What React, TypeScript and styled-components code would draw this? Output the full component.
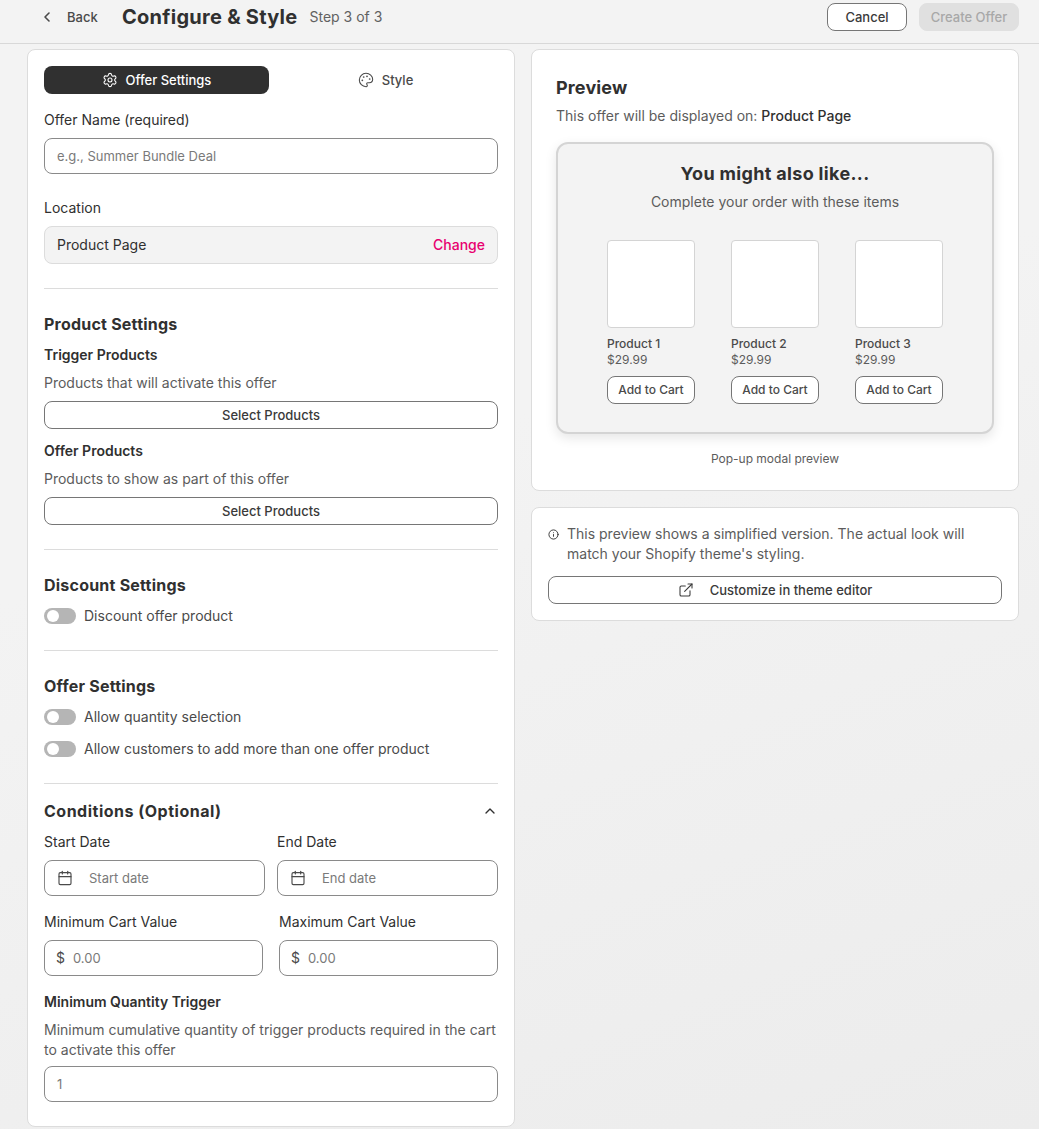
import React from "react";
import styled, { createGlobalStyle } from "styled-components";
import {
  Calendar,
  ChevronLeft,
  ChevronUp,
  ExternalLink,
  Info,
  Palette,
  Settings,
} from "lucide-react";

const GlobalStyle = createGlobalStyle`
  html, body {
    margin: 0;
    height: 1129px;
    overflow: hidden;
  }
  body {
    font-family: Inter, "Liberation Sans", sans-serif;
    font-size: 14px;
    line-height: 20px;
    color: #303030;
    background: #f1f1f1;
  }
  * {
    box-sizing: border-box;
  }
`;

const Page = styled.div`
  height: 1129px;
  background: linear-gradient(160deg, #f3f3f3 40%, #ececec 100%);
`;

const TopBar = styled.header`
  height: 44px;
  padding: 3px 20px 0 39px;
  display: flex;
  justify-content: space-between;
  align-items: flex-start;
  background: #f3f3f3;
  border-bottom: 1px solid #d8d8d8;
`;

const TopLeft = styled.div`
  display: flex;
  align-items: center;
  height: 28px;
`;

const BackLink = styled.div`
  display: flex;
  align-items: center;
  gap: 12px;
  width: 83px;
  font-size: 13px;
  font-weight: 500;
  color: #4a4a4a;
`;

const PageTitle = styled.h1`
  margin: 0 12px 0 0;
  font-size: 20px;
  line-height: 28px;
  font-weight: 700;
  letter-spacing: 0.27px;
  color: #303030;
`;

const StepText = styled.span`
  color: #616161;
  font-size: 14px;
`;

const TopActions = styled.div`
  display: flex;
  gap: 12px;
`;

const Button = styled.button<{ $width?: string }>`
  display: flex;
  align-items: center;
  justify-content: center;
  gap: 16px;
  height: 28px;
  width: ${(p) => p.$width || "100%"};
  padding: 0;
  font-family: inherit;
  font-size: 13px;
  font-weight: 500;
  color: #3a3a3a;
  background: #fff;
  border: 1px solid #767676;
  border-radius: 8px;
`;

const DisabledButton = styled(Button)`
  background: #e0e0e0;
  border-color: #e0e0e0;
  color: #a8a8a8;
`;

const Columns = styled.main`
  display: grid;
  grid-template-columns: 488px 488px;
  gap: 16px;
  padding: 5px 20px 0 27px;
  align-items: start;
`;

const Side = styled.div`
  display: flex;
  flex-direction: column;
  gap: 16px;
`;

const Card = styled.section<{ $pad?: number }>`
  padding: ${(p) => p.$pad ?? 16}px;
  background: #fff;
  border: 1px solid #dcdcdc;
  border-radius: 8px;
`;

const Tabs = styled.div`
  display: grid;
  grid-template-columns: 1fr 1fr;
  gap: 4px;
  margin-bottom: 16px;
`;

const Tab = styled.div<{ $active?: boolean }>`
  display: flex;
  align-items: center;
  justify-content: center;
  gap: 8px;
  height: 28px;
  font-size: 13px;
  font-weight: 500;
  border-radius: 8px;
  background: ${(p) => (p.$active ? "#303030" : "transparent")};
  color: ${(p) => (p.$active ? "#fff" : "#4a4a4a")};
`;

const Label = styled.div`
  margin-bottom: 8px;
  color: #303030;
`;

const Field = styled.div<{ $gap?: number }>`
  margin-bottom: ${(p) => p.$gap ?? 0}px;
`;

const InputBox = styled.label`
  display: flex;
  align-items: center;
  height: 36px;
  padding: 0 12px;
  background: #fff;
  border: 1px solid #8a8a8a;
  border-radius: 8px;
`;

const TextInput = styled.input`
  flex: 1;
  width: 0;
  min-width: 0;
  padding: 0;
  border: 0;
  outline: 0;
  background: transparent;
  font-family: inherit;
  font-size: 13px;
  color: #303030;
  &::placeholder {
    color: #7a7a7a;
    opacity: 1;
  }
`;

const CalendarSlot = styled.span`
  display: flex;
  width: 32px;
  color: #4a4a4a;
`;

const Currency = styled.span`
  width: 17px;
  margin-left: -1px;
  color: #4a4a4a;
  font-size: 14px;
`;

const LocationBox = styled.div`
  display: flex;
  align-items: center;
  justify-content: space-between;
  height: 38px;
  padding: 0 12px;
  background: #f3f3f3;
  border: 1px solid #dcdcdc;
  border-radius: 8px;
`;

const ChangeLink = styled.span`
  color: #e8006f;
  font-weight: 500;
`;

const Divider = styled.hr<{ $after?: number }>`
  height: 1px;
  margin: 24px 0 ${(p) => p.$after ?? 23}px;
  border: 0;
  background: #dcdcdc;
`;

const SectionTitle = styled.h2<{ $spacing?: number }>`
  margin: 0 0 9px;
  font-size: 16px;
  line-height: 24px;
  font-weight: 700;
  letter-spacing: ${(p) => p.$spacing ?? 0.22}px;
  color: #303030;
`;

const SubTitle = styled.h3`
  margin: 0 0 8px;
  font-size: 14px;
  line-height: 20px;
  font-weight: 600;
  color: #303030;
`;

const Hint = styled.p<{ $after?: number }>`
  margin: 0 0 ${(p) => p.$after ?? 8}px;
  color: #5c5c5c;
`;

const ProductGroup = styled.div`
  margin-bottom: 12px;
  &:last-child {
    margin-bottom: 0;
  }
`;

const ToggleRow = styled.div`
  display: flex;
  align-items: center;
  gap: 8px;
  margin-bottom: 12px;
  color: #4a4a4a;
  &:last-child {
    margin-bottom: 0;
  }
`;

const ToggleTrack = styled.span`
  display: flex;
  align-items: center;
  width: 32px;
  height: 16px;
  padding: 0 3px;
  border-radius: 8px;
  background: #b5b5b5;
`;

const ToggleKnob = styled.span`
  width: 12px;
  height: 12px;
  border-radius: 50%;
  background: #fff;
`;

const CollapseHead = styled.div`
  display: flex;
  align-items: center;
  justify-content: space-between;
  color: #303030;
  margin-bottom: 9px;
  ${SectionTitle} {
    margin: 0;
  }
`;

const TwoCols = styled.div<{ $gap: number }>`
  display: grid;
  grid-template-columns: minmax(0, 1fr) minmax(0, 1fr);
  gap: ${(p) => p.$gap}px;
  margin-bottom: 16px;
`;

const PreviewTitle = styled.h2`
  margin: 0 0 4px;
  font-size: 18px;
  line-height: 28px;
  font-weight: 700;
  letter-spacing: 0.15px;
  color: #303030;
`;

const PreviewNote = styled.p`
  margin: 0 0 16px;
  color: #5c5c5c;
  strong {
    font-weight: 500;
    color: #303030;
  }
`;

const Modal = styled.div`
  height: 292px;
  padding: 16px 0 0;
  background: #f3f3f3;
  border: 2px solid #d4d4d4;
  border-radius: 12px;
  box-shadow: 0 4px 12px rgba(0, 0, 0, 0.1);
  text-align: center;
`;

const ModalTitle = styled.div`
  font-size: 18px;
  line-height: 28px;
  font-weight: 700;
  letter-spacing: 0.33px;
  color: #303030;
`;

const ModalSub = styled.div`
  margin-top: 4px;
  margin-bottom: 28px;
  font-size: 14px;
  color: #5c5c5c;
`;

const ProductRow = styled.div`
  display: flex;
  justify-content: center;
  gap: 36px;
`;

const ProductCard = styled.div`
  width: 88px;
  text-align: left;
`;

const ProductImage = styled.div`
  height: 88px;
  margin-bottom: 8px;
  background: #fff;
  border: 1px solid #d4d4d4;
  border-radius: 4px;
`;

const ProductName = styled.div`
  font-size: 12px;
  line-height: 16px;
  font-weight: 500;
  color: #4a4a4a;
`;

const ProductPrice = styled.div`
  margin-bottom: 8px;
  font-size: 12px;
  line-height: 16px;
  color: #5c5c5c;
`;

const SmallButton = styled(Button)`
  padding-bottom: 1px;
  font-size: 12px;
  color: #4a4a4a;
`;

const Caption = styled.div`
  margin-top: 17px;
  margin-bottom: -1px;
  font-size: 12px;
  line-height: 16px;
  text-align: center;
  color: #5c5c5c;
`;

const InfoRow = styled.div`
  display: flex;
  gap: 8px;
  margin-bottom: 12px;
  color: #5c5c5c;
`;

const InfoIcon = styled.span`
  display: flex;
  flex: none;
  width: 11px;
  padding-top: 5px;
  color: #303030;
`;

const products = ["Product 1", "Product 2", "Product 3"];

const Toggle: React.FC<{ label: string }> = ({ label }) => (
  <ToggleRow>
    <ToggleTrack>
      <ToggleKnob />
    </ToggleTrack>
    {label}
  </ToggleRow>
);

const DateField: React.FC<{ label: string; placeholder: string }> = ({
  label,
  placeholder,
}) => (
  <div>
    <Label>{label}</Label>
    <InputBox>
      <CalendarSlot>
        <Calendar size={16} strokeWidth={1.7} />
      </CalendarSlot>
      <TextInput placeholder={placeholder} />
    </InputBox>
  </div>
);

const MoneyField: React.FC<{ label: string }> = ({ label }) => (
  <div>
    <Label>{label}</Label>
    <InputBox>
      <Currency>$</Currency>
      <TextInput placeholder="0.00" />
    </InputBox>
  </div>
);

export default function App() {
  return (
    <Page>
      <GlobalStyle />
      <TopBar>
        <TopLeft>
          <BackLink>
            <ChevronLeft size={16} strokeWidth={2.4} />
            Back
          </BackLink>
          <PageTitle>Configure &amp; Style</PageTitle>
          <StepText>Step 3 of 3</StepText>
        </TopLeft>
        <TopActions>
          <Button $width="80px">Cancel</Button>
          <DisabledButton $width="100px">Create Offer</DisabledButton>
        </TopActions>
      </TopBar>

      <Columns>
        <Card>
          <Tabs>
            <Tab $active>
              <Settings size={16} strokeWidth={1.6} />
              Offer Settings
            </Tab>
            <Tab>
              <Palette size={16} strokeWidth={1.6} />
              Style
            </Tab>
          </Tabs>

          <Field $gap={24}>
            <Label>Offer Name (required)</Label>
            <InputBox>
              <TextInput placeholder="e.g., Summer Bundle Deal" />
            </InputBox>
          </Field>

          <Label>Location</Label>
          <LocationBox>
            Product Page
            <ChangeLink>Change</ChangeLink>
          </LocationBox>

          <Divider />

          <SectionTitle>Product Settings</SectionTitle>
          <ProductGroup>
            <SubTitle>Trigger Products</SubTitle>
            <Hint>Products that will activate this offer</Hint>
            <Button>Select Products</Button>
          </ProductGroup>
          <ProductGroup>
            <SubTitle>Offer Products</SubTitle>
            <Hint>Products to show as part of this offer</Hint>
            <Button>Select Products</Button>
          </ProductGroup>

          <Divider />

          <SectionTitle>Discount Settings</SectionTitle>
          <Toggle label="Discount offer product" />

          <Divider />

          <SectionTitle>Offer Settings</SectionTitle>
          <div>
            <Toggle label="Allow quantity selection" />
            <Toggle label="Allow customers to add more than one offer product" />
          </div>

          <Divider $after={15} />

          <CollapseHead>
            <SectionTitle $spacing={0.5}>Conditions (Optional)</SectionTitle>
            <ChevronUp size={16} strokeWidth={2} />
          </CollapseHead>
          <TwoCols $gap={12}>
            <DateField label="Start Date" placeholder="Start date" />
            <DateField label="End Date" placeholder="End date" />
          </TwoCols>
          <TwoCols $gap={16}>
            <MoneyField label="Minimum Cart Value" />
            <MoneyField label="Maximum Cart Value" />
          </TwoCols>
          <SubTitle>Minimum Quantity Trigger</SubTitle>
          <Hint $after={6}>
            Minimum cumulative quantity of trigger products required in the cart
            to activate this offer
          </Hint>
          <Field $gap={8}>
            <InputBox>
              <TextInput placeholder="1" />
            </InputBox>
          </Field>
        </Card>

        <Side>
          <Card $pad={24}>
            <PreviewTitle>Preview</PreviewTitle>
            <PreviewNote>
              This offer will be displayed on: <strong>Product Page</strong>
            </PreviewNote>
            <Modal>
              <ModalTitle>You might also like...</ModalTitle>
              <ModalSub>Complete your order with these items</ModalSub>
              <ProductRow>
                {products.map((name) => (
                  <ProductCard key={name}>
                    <ProductImage />
                    <ProductName>{name}</ProductName>
                    <ProductPrice>$29.99</ProductPrice>
                    <SmallButton>Add to Cart</SmallButton>
                  </ProductCard>
                ))}
              </ProductRow>
            </Modal>
            <Caption>Pop-up modal preview</Caption>
          </Card>

          <Card>
            <InfoRow>
              <InfoIcon>
                <Info size={11} strokeWidth={2} />
              </InfoIcon>
              <span>
                This preview shows a simplified version. The actual look will
                match your Shopify theme's styling.
              </span>
            </InfoRow>
            <Button>
              <ExternalLink size={16} strokeWidth={1.6} />
              Customize in theme editor
            </Button>
          </Card>
        </Side>
      </Columns>
    </Page>
  );
}
